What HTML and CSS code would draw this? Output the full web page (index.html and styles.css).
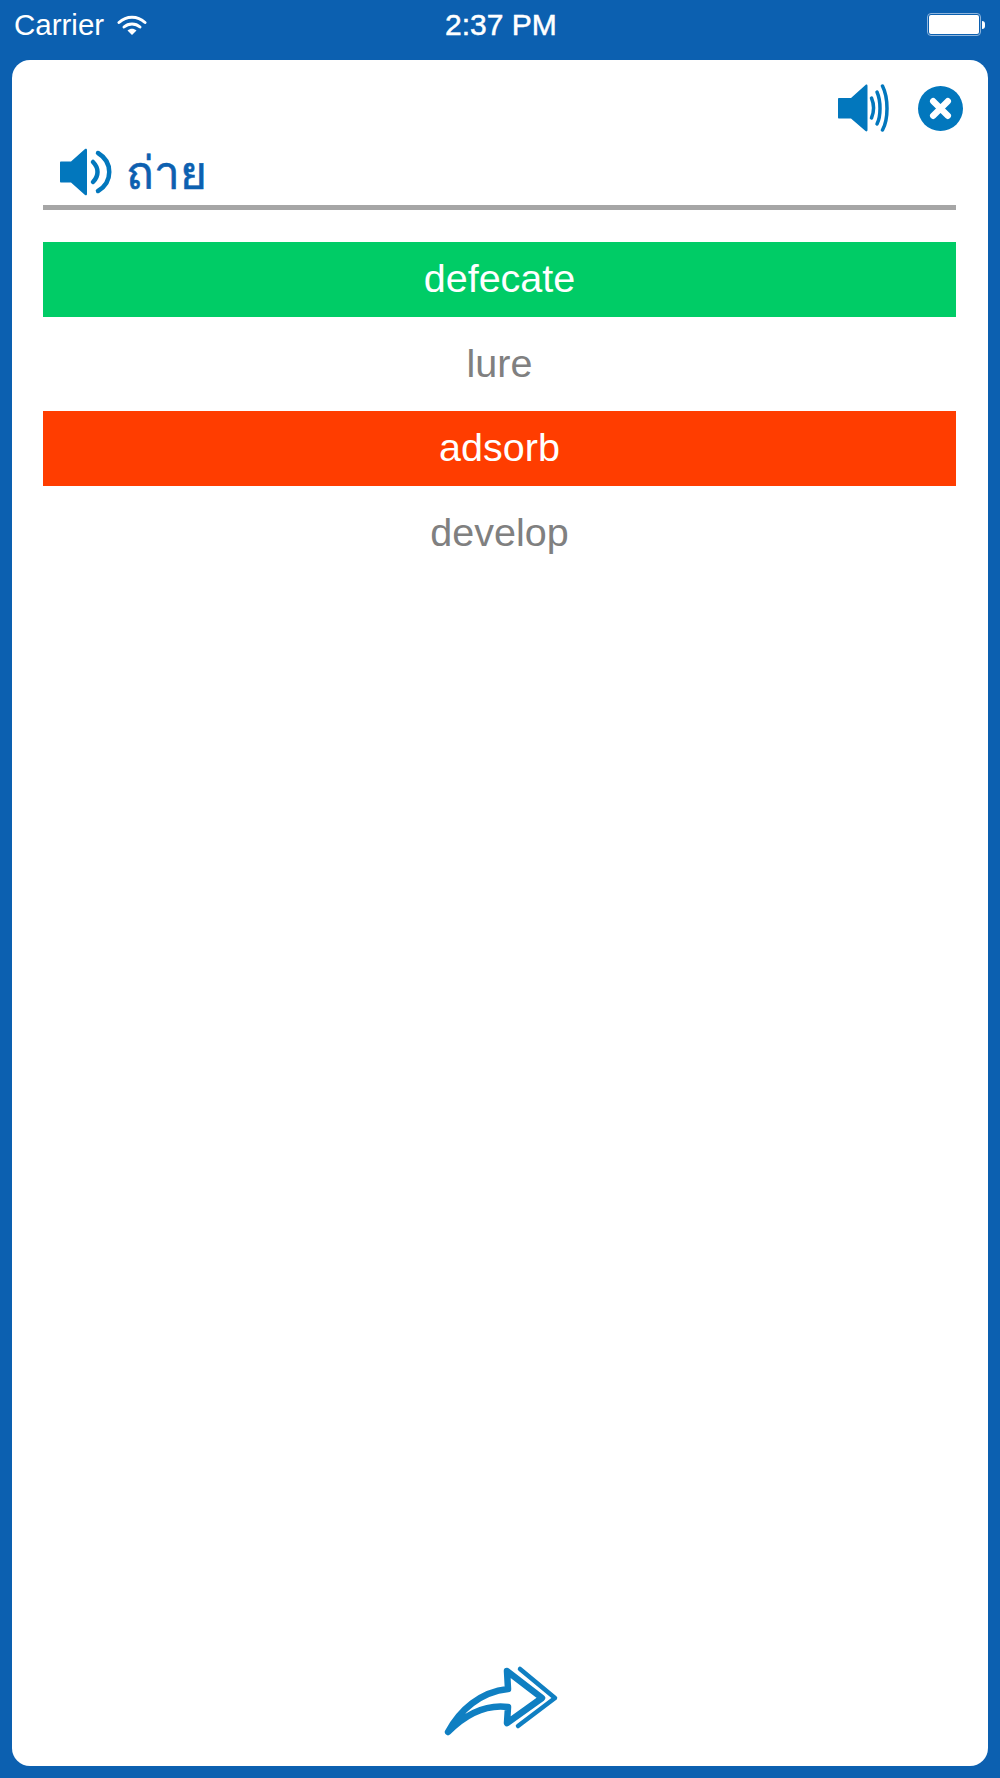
FILE: index.html
```html
<!DOCTYPE html>
<html lang="en">
<head>
    <meta charset="UTF-8">
    <title>Quiz</title>
    <link rel="stylesheet" href="styles.css">
</head>
<body>
    <!-- Status bar -->
    <div class="status-bar">
        <div class="status-left">
            <span>Carrier</span>
            <svg class="wifi" width="30" height="22" viewBox="0 0 30 22">
                <path d="M2 8.500C9.500 1.500 20.500 1.500 28 8.500" fill="none" stroke="#fff" stroke-width="3" stroke-linecap="round"/>
                <path d="M7 13C11.500 9 18.500 9 23 13" fill="none" stroke="#fff" stroke-width="3" stroke-linecap="round"/>
                <path d="M10.500 16.500C13.500 14.200 16.500 14.200 19.500 16.500L15 21Z" fill="#fff"/>
            </svg>
        </div>
        <div class="status-time">2:37 PM</div>
        <div class="status-right">
            <div class="battery"><div class="battery-fill"></div></div>
            <div class="battery-tip"></div>
        </div>
    </div>

    <!-- Main card -->
    <div class="card">
        <div class="top-icons">
            <svg width="52" height="48" viewBox="0 0 52 48">
                <path d="M1 14H13L27.500 1C28.500 0.200 29.500 0.700 29.500 2V46C29.500 47.300 28.500 47.800 27.500 47L13 34.500H1C0.400 34.500 0 34 0 33.500V15C0 14.500 0.400 14 1 14Z" fill="#0277bd"/>
                <path d="M33.500 14C36 20 36 28 33.500 34" fill="none" stroke="#0277bd" stroke-width="3.500" stroke-linecap="round"/>
                <path d="M39 8C43 17 43 32 39 40" fill="none" stroke="#0277bd" stroke-width="3.500" stroke-linecap="round"/>
                <path d="M44.500 2C50.500 14 50.500 35 44.500 46" fill="none" stroke="#0277bd" stroke-width="3.500" stroke-linecap="round"/>
            </svg>
            <svg class="close-icon" width="45" height="45" viewBox="0 0 46 46">
                <circle cx="23" cy="23" r="23" fill="#0277bd"/>
                <path d="M15.500 15.500L30.500 30.500M30.500 15.500L15.500 30.500" stroke="#fff" stroke-width="6.500" stroke-linecap="round"/>
            </svg>
        </div>

        <div class="word-row">
            <svg width="54" height="48" viewBox="0 0 54 48">
                <path d="M1 13.500H11L25 1C26 0.300 27 0.800 27 2V46C27 47.200 26 47.700 25 47L11 34.500H1C0.400 34.500 0 34 0 33.500V14.500C0 14 0.400 13.500 1 13.500Z" fill="#0277bd"/>
                <path d="M33 14C39 20 39 28 33 34" fill="none" stroke="#0277bd" stroke-width="4.500" stroke-linecap="round"/>
                <path d="M38 5C53 14 53 34 38 43" fill="none" stroke="#0277bd" stroke-width="4.500" stroke-linecap="round"/>
            </svg>
            <span class="word">ถ่าย</span>
        </div>

        <div class="answers">
            <div class="answer correct">defecate</div>
            <div class="answer">lure</div>
            <div class="answer wrong">adsorb</div>
            <div class="answer">develop</div>
        </div>

        <div class="next">
            <svg width="125" height="80" viewBox="0 0 125 80">
                <path d="M8 72C20 50 40 32 68 29L67 11L102 38L67 63L68 47C45 44 25 55 8 72Z" fill="#fff" stroke="#0f7fc2" stroke-width="6.500" stroke-linejoin="round"/>
                <path d="M80 9L115 38L78 66" fill="none" stroke="#0f7fc2" stroke-width="4.500" stroke-linecap="round" stroke-linejoin="round"/>
            </svg>
        </div>
    </div>
</body>
</html>
```

FILE: styles.css
```css
* {
    margin: 0;
    padding: 0;
    box-sizing: border-box;
}
body {
    width: 1000px;
    height: 1778px;
    background-color: #0c60b0;
    font-family: 'Liberation Sans', Arial, sans-serif;
    padding: 0 12px 12px 12px;
    display: flex;
    flex-direction: column;
}
.status-bar {
    height: 60px;
    display: flex;
    align-items: flex-start;
    justify-content: space-between;
    color: #fff;
    font-size: 29.5px;
    padding-top: 8px;
    position: relative;
}
.status-left {
    display: flex;
    align-items: center;
    gap: 13px;
    padding-left: 2px;
}
.status-time {
    position: absolute;
    left: 433px;
    top: 8px;
    font-size: 30px;
    -webkit-text-stroke: 0.5px #fff;
}
.status-right {
    display: flex;
    align-items: center;
    margin-top: 5px;
}
.battery {
    width: 54px;
    height: 23px;
    border: 1px solid #8db4dc;
    border-radius: 4px;
    padding: 1px;
}
.battery-fill {
    height: 100%;
    background: #fff;
    border-radius: 2px;
}
.battery-tip {
    width: 3px;
    height: 8px;
    background: #fff;
    border-radius: 0 3px 3px 0;
    margin-left: 1px;
    margin-right: 3px;
}
.card {
    flex: 1;
    background: #fff;
    border-radius: 18px;
    padding: 23px 32px 0 31px;
    display: flex;
    flex-direction: column;
}
.top-icons {
    display: flex;
    justify-content: flex-end;
    align-items: center;
    gap: 28px;
    margin-right: -7px;
    height: 50px;
}
.word-row {
    display: flex;
    align-items: center;
    gap: 12px;
    height: 77px;
    padding-left: 17px;
    padding-top: 6px;
    border-bottom: 5px solid #a6a6a6;
    margin-bottom: 32px;
}
.word {
    font-family: 'Noto Sans', 'DejaVu Sans', sans-serif;
    font-size: 46px;
    color: #0c60b0;
    -webkit-text-stroke: 0.6px #0c60b0;
}
.answers {
    display: flex;
    flex-direction: column;
    gap: 9.5px;
}
.answer {
    height: 75px;
    line-height: 73px;
    text-align: center;
    font-size: 39.5px;
    color: #808080;
}
.correct {
    background: #00cc66;
    color: #fff;
}
.wrong {
    background: #ff3d00;
    color: #fff;
}
.next {
    margin-top: auto;
    display: flex;
    justify-content: center;
    padding-left: 5px;
    padding-bottom: 26px;
}
```
